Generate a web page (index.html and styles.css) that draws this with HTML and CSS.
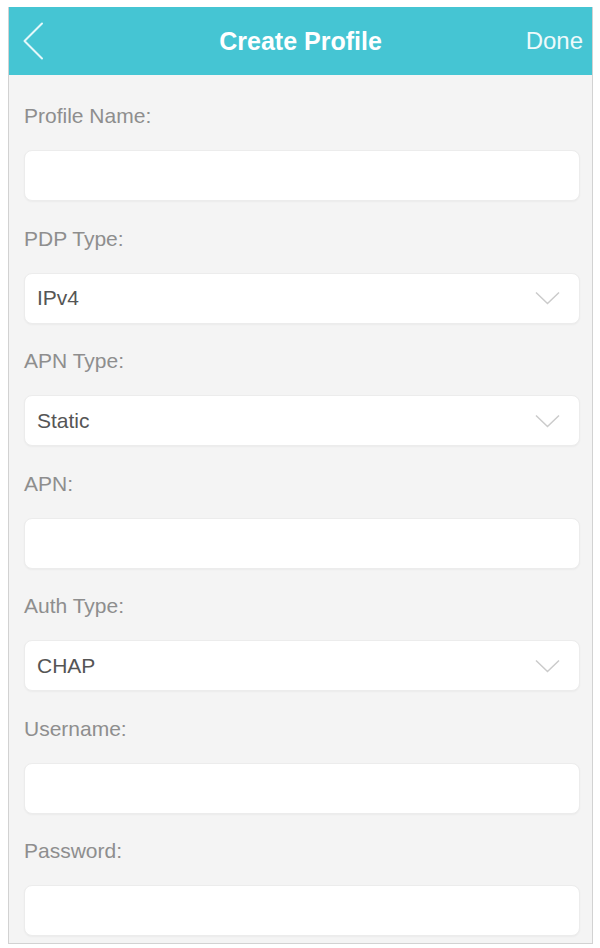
FILE: index.html
```html
<!DOCTYPE html>
<html lang="en">
<head>
<meta charset="utf-8">
<title>Create Profile</title>
<link rel="stylesheet" href="styles.css">
</head>
<body>
<div class="phone">
  <header class="topbar">
    <div class="back">
      <svg width="22" height="38" viewBox="0 0 22 38" aria-hidden="true"><polyline points="20,1.5 2.5,19 20,36.5" fill="none" stroke="#e4f8fa" stroke-width="2" stroke-linecap="round" stroke-linejoin="round"/></svg>
    </div>
    <div class="title">Create Profile</div>
    <div class="done">Done</div>
  </header>
  <main class="form">
    <div class="group">
      <div class="label">Profile Name:</div>
      <div class="field"></div>
    </div>
    <div class="group">
      <div class="label">PDP Type:</div>
      <div class="field select"><span class="value">IPv4</span>
        <svg class="chev" width="25" height="14" viewBox="0 0 25 14" aria-hidden="true"><polyline points="1,1.5 12.5,12.5 24,1.5" fill="none" stroke="#cbcbcb" stroke-width="1.5"/></svg></div>
    </div>
    <div class="group">
      <div class="label">APN Type:</div>
      <div class="field select"><span class="value">Static</span>
        <svg class="chev" width="25" height="14" viewBox="0 0 25 14" aria-hidden="true"><polyline points="1,1.5 12.5,12.5 24,1.5" fill="none" stroke="#cbcbcb" stroke-width="1.5"/></svg></div>
    </div>
    <div class="group">
      <div class="label">APN:</div>
      <div class="field"></div>
    </div>
    <div class="group">
      <div class="label">Auth Type:</div>
      <div class="field select"><span class="value">CHAP</span>
        <svg class="chev" width="25" height="14" viewBox="0 0 25 14" aria-hidden="true"><polyline points="1,1.5 12.5,12.5 24,1.5" fill="none" stroke="#cbcbcb" stroke-width="1.5"/></svg></div>
    </div>
    <div class="group">
      <div class="label">Username:</div>
      <div class="field"></div>
    </div>
    <div class="group">
      <div class="label">Password:</div>
      <div class="field"></div>
    </div>
  </main>
</div>
</body>
</html>
```
FILE: styles.css
```css
html, body {
  margin: 0;
  padding: 0;
  background: #ffffff;
}
body {
  font-family: "Liberation Sans", Arial, sans-serif;
}
.phone {
  margin: 7px 7px 0 8px;
  width: 585px;
  height: 937px;
  box-sizing: border-box;
  border: 1px solid #d2d2d2;
  border-top: none;
  background: #f4f4f4;
  overflow: hidden;
}
.topbar {
  height: 68px;
  margin: 0 -1px;
  background: #45c5d3;
  display: grid;
  grid-template-columns: 1fr auto 1fr;
  align-items: center;
  color: #ffffff;
}
.back {
  padding-left: 14px;
  display: flex;
  align-items: center;
}
.title {
  font-size: 25px;
  font-weight: bold;
}
.done {
  justify-self: end;
  padding-right: 10px;
  font-size: 24px;
  color: #eefafb;
}
.form {
  padding: 29px 12px 0 15px;
  display: flex;
  flex-direction: column;
  gap: 25.5px;
}
.group {
  display: flex;
  flex-direction: column;
}
.label {
  font-size: 21px;
  line-height: 24px;
  color: #8e8e8e;
  margin-bottom: 22px;
}
.field {
  height: 51px;
  box-sizing: border-box;
  background: #ffffff;
  border: 1px solid #ececec;
  border-radius: 8px;
  box-shadow: 0 1px 2px rgba(0, 0, 0, 0.04);
  display: flex;
  align-items: center;
  padding: 0 19px 0 12px;
}
.select {
  justify-content: space-between;
}
.value {
  font-size: 21px;
  color: #555555;
}
.chev {
  display: block;
}
```
